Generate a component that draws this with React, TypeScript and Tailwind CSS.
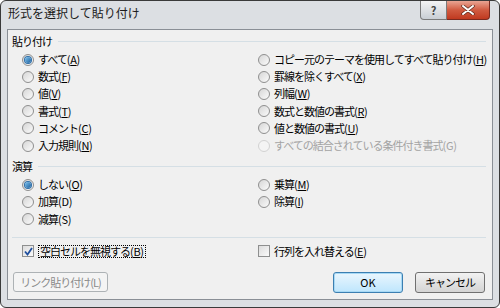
import React from "react";

const jp = { fontFamily: '"Noto Sans CJK JP", "Noto Sans", sans-serif' };

type Opt = { label: string; key: string; checked?: boolean; disabled?: boolean; ul?: boolean };

function Radio({ checked, disabled }: { checked?: boolean; disabled?: boolean }) {
  return (
    <span
      className={
        "relative flex h-[12px] w-[12px] shrink-0 items-center justify-center rounded-full border " +
        (disabled
          ? "border-[#d2d2d2] bg-[#f4f4f4]"
          : "border-[#8f8f8f] bg-gradient-to-br from-[#d6d6d6] to-[#fbfbfb]")
      }
    >
      {checked && (
        <span className="h-[6px] w-[6px] rounded-full bg-gradient-to-br from-[#7ec4f0] to-[#1a5f9c] ring-1 ring-[#2d6ea8]" />
      )}
    </span>
  );
}

function Label({ o }: { o: Opt }) {
  return (
    <span className={o.disabled ? "text-[#a3a3a3]" : "text-black"}>
      {o.label}
      <span className="tracking-[-0.3px]">
        (<span className={o.ul === false || o.disabled ? "" : "underline underline-offset-[1px]"}>{o.key}</span>)
      </span>
    </span>
  );
}

function RadioRow({ o }: { o: Opt }) {
  return (
    <div className="flex h-[17.2px] items-center gap-[4px]">
      <Radio checked={o.checked} disabled={o.disabled} />
      <Label o={o} />
    </div>
  );
}

function Check({ checked }: { checked?: boolean }) {
  return (
    <span className="flex h-[12px] w-[12px] shrink-0 items-center justify-center border border-[#8e8f8f] bg-gradient-to-br from-[#dcdcdc] to-[#fafafa]">
      {checked && (
        <svg width="9" height="9" viewBox="0 0 9 9">
          <path d="M1 4.5 L3.5 7.5 L8 1" fill="none" stroke="#1f4f9e" strokeWidth="1.8" />
        </svg>
      )}
    </span>
  );
}

function Header({ text }: { text: string }) {
  return (
    <div className="flex h-[14px] items-center gap-[6px] pl-[4px] pr-[6px]">
      <span>{text}</span>
      <span className="h-px flex-1 bg-[#d5dfe5]" />
    </div>
  );
}

const pasteLeft: Opt[] = [
  { label: "すべて", key: "A", checked: true },
  { label: "数式", key: "F" },
  { label: "値", key: "V" },
  { label: "書式", key: "T" },
  { label: "コメント", key: "C" },
  { label: "入力規則", key: "N" },
];

const pasteRight: Opt[] = [
  { label: "コピー元のテーマを使用してすべて貼り付け", key: "H" },
  { label: "罫線を除くすべて", key: "X" },
  { label: "列幅", key: "W" },
  { label: "数式と数値の書式", key: "R" },
  { label: "値と数値の書式", key: "U" },
  { label: "すべての結合されている条件付き書式", key: "G", disabled: true },
];

const opLeft: Opt[] = [
  { label: "しない", key: "O", checked: true },
  { label: "加算", key: "D", ul: false },
  { label: "減算", key: "S", ul: false },
];

const opRight: Opt[] = [
  { label: "乗算", key: "M" },
  { label: "除算", key: "I" },
];

export default function App() {
  return (
    <div
      style={jp}
      className="flex h-[308px] w-[500px] flex-col rounded-[6px] border border-[#3a3a3a] bg-[#dcdfe3] px-[6px] pb-[7px] text-[11px] leading-none tracking-[-1px]"
    >
      {/* title bar */}
      <div className="flex h-[28px] shrink-0 items-start justify-between">
        <span className="mt-[6px] pl-[1px] text-[12px] tracking-normal text-[#1a1a1a]">形式を選択して貼り付け</span>
        <div className="mr-[3px] flex">
          <div className="flex h-[19px] w-[27px] items-center justify-center rounded-bl-[4px] border border-t-0 border-[#7a7a7a] bg-gradient-to-b from-[#f4f4f4] to-[#c9ced4] text-[11px] font-bold text-[#444] tracking-normal">
            ?
          </div>
          <div className="flex h-[19px] w-[43px] items-center justify-center rounded-br-[4px] border border-l-0 border-t-0 border-[#7a2a1f] bg-gradient-to-b from-[#e8a493] via-[#d05a40] to-[#c0391f]">
            <svg width="14" height="10" viewBox="0 0 14 10">
              <path d="M2 1 L12 9 M12 1 L2 9" stroke="#5a2a1e" strokeWidth="3.4" strokeLinecap="round" />
              <path d="M2 1 L12 9 M12 1 L2 9" stroke="#ffffff" strokeWidth="2" strokeLinecap="round" />
            </svg>
          </div>
        </div>
      </div>

      {/* client */}
      <div className="flex flex-1 flex-col border border-[#8a8f96] bg-[#f0f0f0] pt-[4px]">
        <Header text="貼り付け" />
        <div className="mt-[3px] grid grid-cols-[236px_1fr] pl-[14px]">
          <div>
            {pasteLeft.map((o) => (
              <RadioRow key={o.key} o={o} />
            ))}
          </div>
          <div>
            {pasteRight.map((o) => (
              <RadioRow key={o.key} o={o} />
            ))}
          </div>
        </div>

        <div className="mt-[5px]">
          <Header text="演算" />
        </div>
        <div className="mt-[3px] grid grid-cols-[236px_1fr] pl-[14px]">
          <div>
            {opLeft.map((o) => (
              <RadioRow key={o.key} o={o} />
            ))}
          </div>
          <div>
            {opRight.map((o) => (
              <RadioRow key={o.key} o={o} />
            ))}
          </div>
        </div>

        <div className="mx-[4px] mr-[6px] mt-[9px] h-px bg-[#d5dfe5]" />

        <div className="mt-[5px] grid h-[17px] grid-cols-[236px_1fr] items-center pl-[14px]">
          <div className="flex items-center gap-[4px]">
            <Check checked />
            <span className="border border-dotted border-black px-[1px]">
              空白セルを無視する
              <span className="tracking-[-0.3px]">
                (<span className="underline underline-offset-[1px]">B</span>)
              </span>
            </span>
          </div>
          <div className="flex items-center gap-[4px]">
            <Check />
            <span>
              行列を入れ替える
              <span className="tracking-[-0.3px]">
                (<span className="underline underline-offset-[1px]">E</span>)
              </span>
            </span>
          </div>
        </div>

        <div className="mt-[12px] flex items-center justify-between pl-[5px] pr-[7px]">
          <div className="flex h-[20px] w-[95px] items-center justify-center rounded-[3px] border border-[#adb2b5] bg-[#f4f4f4] text-[#8a8a8a]">
            リンク貼り付け(L)
          </div>
          <div className="flex gap-[12px]">
            <div className="flex h-[21px] w-[70px] items-center justify-center rounded-[3px] border border-[#3c7fb1] bg-gradient-to-b from-[#eaf6fd] to-[#bee6fd] text-black tracking-normal shadow-[inset_0_0_0_1px_#a7d9f5]">
              OK
            </div>
            <div className="flex h-[21px] w-[70px] items-center justify-center rounded-[3px] border border-[#707070] bg-gradient-to-b from-[#f2f2f2] to-[#d4d4d4] text-black">
              キャンセル
            </div>
          </div>
        </div>
      </div>
    </div>
  );
}
